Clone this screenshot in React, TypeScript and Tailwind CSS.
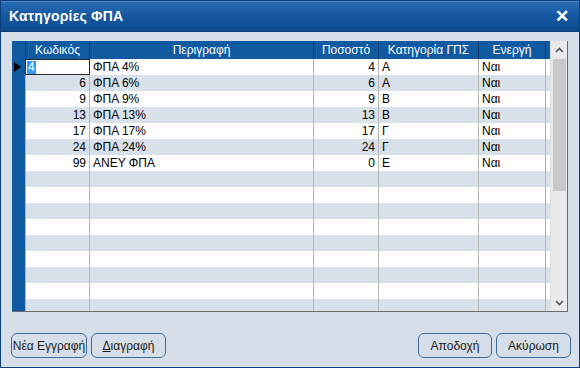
import React from "react";

const rows = [
  { code: "4", desc: "ΦΠΑ 4%", pct: "4", cat: "A", active: "Ναι" },
  { code: "6", desc: "ΦΠΑ 6%", pct: "6", cat: "A", active: "Ναι" },
  { code: "9", desc: "ΦΠΑ 9%", pct: "9", cat: "B", active: "Ναι" },
  { code: "13", desc: "ΦΠΑ 13%", pct: "13", cat: "B", active: "Ναι" },
  { code: "17", desc: "ΦΠΑ 17%", pct: "17", cat: "Γ", active: "Ναι" },
  { code: "24", desc: "ΦΠΑ 24%", pct: "24", cat: "Γ", active: "Ναι" },
  { code: "99", desc: "ΑΝΕΥ ΦΠΑ", pct: "0", cat: "Ε", active: "Ναι" },
];

const emptyRows = Array.from({ length: 9 });

const Btn = ({ children, className = "" }: { children: React.ReactNode; className?: string }) => (
  <button
    className={
      "h-[25px] rounded-[6px] border border-[#3f6b99] bg-[#d6dfe9] text-[12px] text-[#1a1a1a] " +
      className
    }
  >
    {children}
  </button>
);

export default function App() {
  return (
    <div
      className="w-[580px] h-[368px] flex flex-col bg-[#d6dfe9] border border-[#0a3f7c] overflow-hidden"
      style={{ fontFamily: '"Liberation Sans", Arial, sans-serif' }}
    >
      {/* title bar */}
      <div className="h-[31px] shrink-0 flex items-center justify-between px-[8px] bg-gradient-to-b from-[#2a6cb4] via-[#1558a0] to-[#0c4a8e] border-t border-t-[#4f8ad0] border-b border-b-[#0a3f7c]">
        <span className="text-white font-bold text-[14px] tracking-[0.2px]">Κατηγορίες ΦΠΑ</span>
        <span className="text-white font-bold text-[17px] leading-none mr-[2px]">✕</span>
      </div>

      <div className="flex-1 flex flex-col px-[11px] pt-[9px]">
        {/* grid */}
        <div className="h-[271px] w-[556px] flex border-r border-b border-[#6b6b6b] bg-white overflow-hidden">
          {/* row header column */}
          <div className="w-[13px] shrink-0 bg-[#0f5aa0] flex flex-col">
            <div className="h-[18px]" />
            <div className="h-[16px] flex items-center pl-[2px]">
              <svg width="7" height="10" viewBox="0 0 7 10">
                <path d="M0 0 L7 5 L0 10 Z" fill="#000" />
              </svg>
            </div>
          </div>

          {/* data area */}
          <div className="flex-1 flex flex-col text-[12px] text-black">
            <div className="h-[18px] shrink-0 flex bg-[#0f5aa0] text-white">
              <div className="w-[65px] text-center border-x border-[#083a6e] leading-[18px]">Κωδικός</div>
              <div className="w-[224px] text-center border-r border-[#083a6e] leading-[18px]">Περιγραφή</div>
              <div className="w-[65px] text-center border-r border-[#083a6e] leading-[18px]">Ποσοστό</div>
              <div className="w-[100px] text-center border-r border-[#083a6e] leading-[18px]">Κατηγορία ΓΠΣ</div>
              <div className="w-[67px] text-center border-r border-[#083a6e] leading-[18px]">Ενεργή</div>
              <div className="flex-1 bg-[#0f5aa0]" />
            </div>

            {rows.map((r, i) => (
              <div
                key={r.code}
                className={"h-[16px] shrink-0 flex " + (i % 2 === 1 ? "bg-[#d8e0ea]" : "bg-white")}
              >
                {i === 0 ? (
                  <div className="w-[65px] border border-[#2a2a2a] bg-white flex items-center pl-[1px]">
                    <span className="bg-[#3399ff] text-white leading-[13px] px-[1px]">{r.code}</span>
                  </div>
                ) : (
                  <div className="w-[65px] border-x border-[#b4b4b4] text-right pr-[3px] leading-[16px]">
                    {r.code}
                  </div>
                )}
                <div className="w-[224px] border-r border-[#b4b4b4] pl-[3px] leading-[16px]">{r.desc}</div>
                <div className="w-[65px] border-r border-[#b4b4b4] text-right pr-[3px] leading-[16px]">{r.pct}</div>
                <div className="w-[100px] border-r border-[#b4b4b4] pl-[3px] leading-[16px]">{r.cat}</div>
                <div className="w-[67px] border-r border-[#b4b4b4] pl-[3px] leading-[16px]">{r.active}</div>
                <div className="flex-1" />
              </div>
            ))}

            {emptyRows.map((_, j) => {
              const i = j + rows.length;
              return (
                <div
                  key={i}
                  className={"h-[16px] shrink-0 flex " + (i % 2 === 1 ? "bg-[#d8e0ea]" : "bg-white")}
                >
                  <div className="w-[65px] border-x border-[#b4b4b4]" />
                  <div className="w-[224px] border-r border-[#b4b4b4]" />
                  <div className="w-[65px] border-r border-[#b4b4b4]" />
                  <div className="w-[100px] border-r border-[#b4b4b4]" />
                  <div className="w-[67px] border-r border-[#b4b4b4]" />
                  <div className="flex-1" />
                </div>
              );
            })}
          </div>

          {/* scrollbar */}
          <div className="w-[17px] shrink-0 bg-[#eaeaea] flex flex-col items-center border-l border-[#dcdcdc]">
            <div className="h-[17px] w-full flex items-center justify-center">
              <svg width="9" height="6" viewBox="0 0 9 6">
                <path d="M1 5 L4.5 1.5 L8 5" stroke="#555" strokeWidth="1.6" fill="none" />
              </svg>
            </div>
            <div className="w-[13px] h-[132px] bg-[#c8c8c8] mt-[1px]" />
            <div className="flex-1" />
            <div className="h-[17px] w-full flex items-center justify-center">
              <svg width="9" height="6" viewBox="0 0 9 6">
                <path d="M1 1 L4.5 4.5 L8 1" stroke="#555" strokeWidth="1.6" fill="none" />
              </svg>
            </div>
          </div>
        </div>

        {/* buttons */}
        <div className="flex items-center mt-[21px]">
          <Btn className="w-[76px] -ml-[1px]">Νέα Εγγραφή</Btn>
          <Btn className="w-[75px] ml-[4px]">
            <span className="underline">Δ</span>ιαγραφή
          </Btn>
          <div className="flex-1" />
          <Btn className="w-[74px]">Αποδοχή</Btn>
          <Btn className="w-[75px] ml-[4px] -mr-[3px]">Ακύρωση</Btn>
        </div>
      </div>
    </div>
  );
}
